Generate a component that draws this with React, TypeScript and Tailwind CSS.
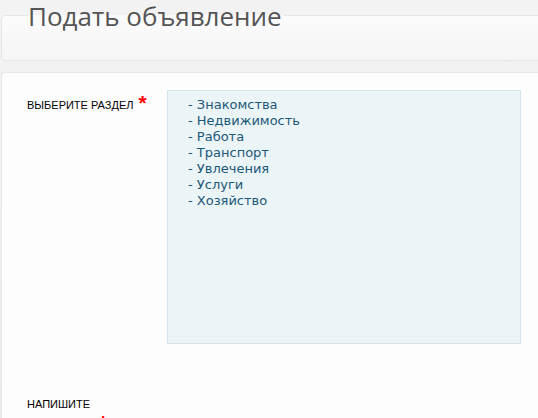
const sections = ['Знакомства', 'Недвижимость', 'Работа', 'Транспорт', 'Увлечения', 'Услуги', 'Хозяйство'];

const labelFont = { fontFamily: '"Liberation Sans", Arial, sans-serif' };

function Star({ className = '' }: { className?: string }) {
  return <span className={`text-[21px] leading-[13px] font-bold text-[#ff0000] ${className}`}>*</span>;
}

export default function App() {
  return (
    <div className="h-[418px] w-[538px] overflow-hidden bg-gradient-to-b from-[#f3f3f3] to-[#ececec]">
      <div className="ml-px mt-[15px] h-[46px] rounded-l-[4px] border border-r-0 border-[#e6e6e6] bg-gradient-to-b from-[#fbfbfb] to-[#f5f5f5]">
        <h1
          className="-mt-[14px] ml-[26px] w-fit bg-[linear-gradient(to_bottom,#f2f2f2_0,#f2f2f2_13px,#fafafa_13px)] pr-[2px] text-[26px] leading-[28px] text-[#555]"
          style={{ fontFamily: '"Open Sans", sans-serif' }}
        >
          Подать объявление
        </h1>
      </div>
      <div className="ml-px mt-[11px] h-[400px] rounded-tl-[4px] border border-r-0 border-[#e8e8e8] bg-[#fdfdfd]">
        <div className="flex pl-[25px] pt-[17px]">
          <div className="flex w-[140px] items-start gap-[5px] pt-[9px] text-[11px] leading-[13px] text-black" style={labelFont}>
            <span>ВЫБЕРИТЕ РАЗДЕЛ</span>
            <Star className="-mt-[3px]" />
          </div>
          <ul
            className="h-[254px] w-[354px] border border-[#d4e4ea] bg-[#ebf4f6] pl-[20px] pt-[6px] text-[13px] leading-[16px] text-[#1c5878]"
            style={{ fontFamily: '"DejaVu Sans", Verdana, sans-serif' }}
          >
            {sections.map((s) => (
              <li key={s}>- {s}</li>
            ))}
          </ul>
        </div>
        <div className="flex flex-col pl-[25px] pt-[54px] text-[11px] leading-[13px] text-black" style={labelFont}>
          <span>НАПИШИТЕ</span>
          <div className="pl-[72px] pt-[5px]">
            <Star />
          </div>
        </div>
      </div>
    </div>
  );
}
